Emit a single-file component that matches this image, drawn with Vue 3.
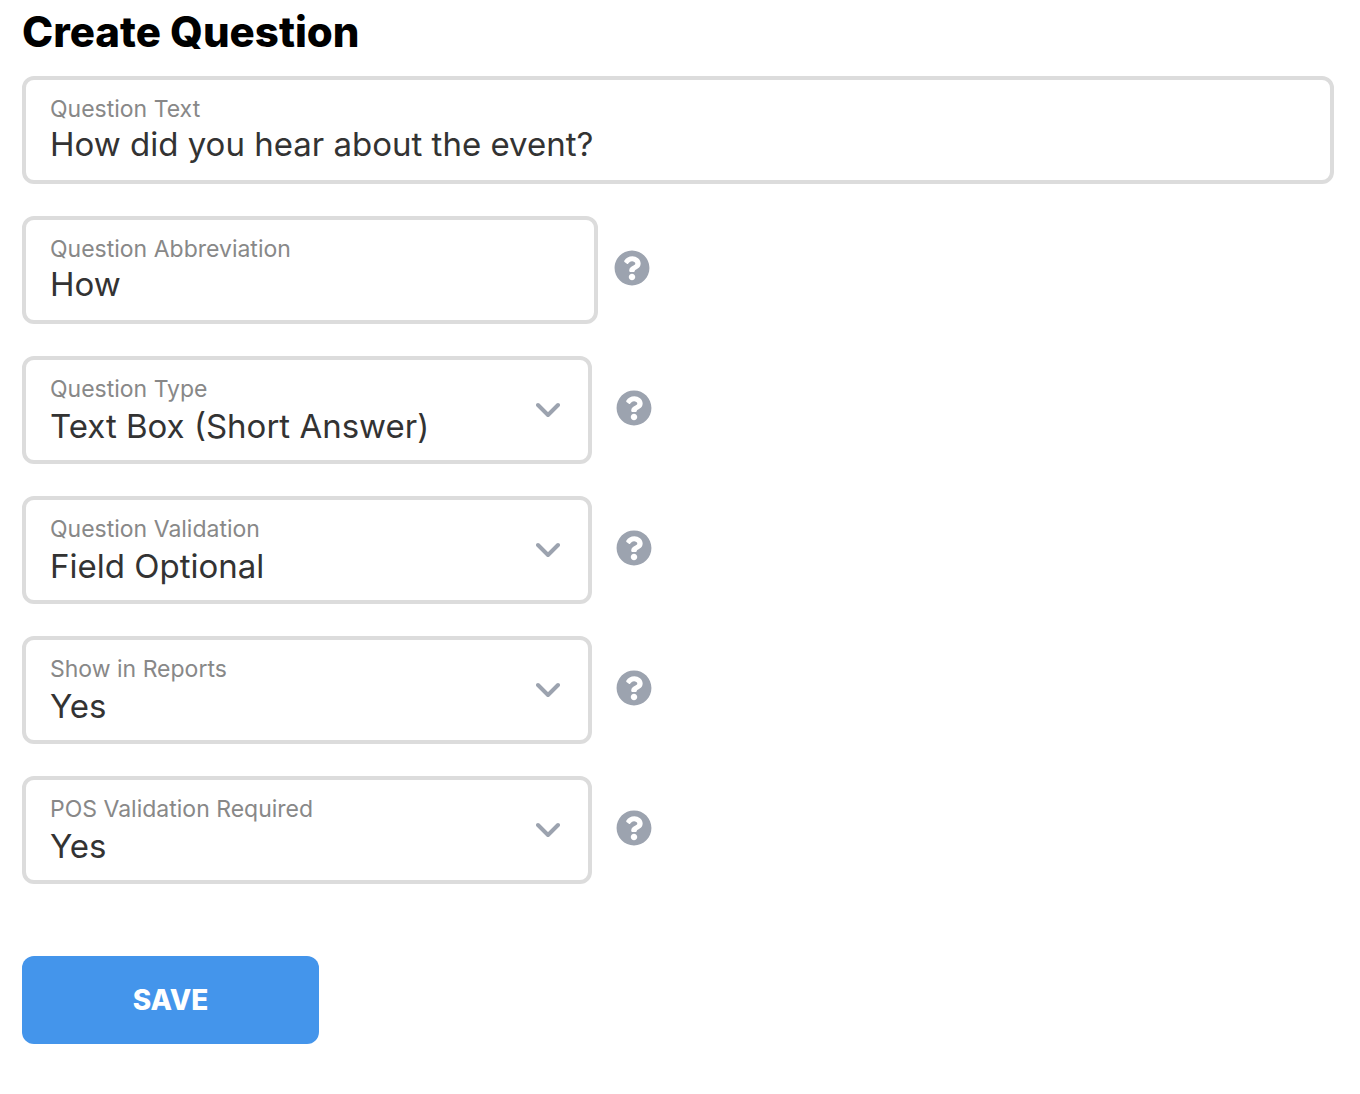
<script setup>
import { ref } from 'vue'

const fields = ref([
  { id: 'text', label: 'Question Text', value: 'How did you hear about the event?', kind: 'input', size: 'full' },
  { id: 'abbreviation', label: 'Question Abbreviation', value: 'How', kind: 'input', size: 'medium', help: true },
  { id: 'type', label: 'Question Type', value: 'Text Box (Short Answer)', kind: 'select', options: ['Text Box (Short Answer)'], size: 'small', help: true },
  { id: 'validation', label: 'Question Validation', value: 'Field Optional', kind: 'select', options: ['Field Optional'], size: 'small', help: true },
  { id: 'reports', label: 'Show in Reports', value: 'Yes', kind: 'select', options: ['Yes'], size: 'small', help: true },
  { id: 'pos', label: 'POS Validation Required', value: 'Yes', kind: 'select', options: ['Yes'], size: 'small', help: true },
])
</script>

<template>
  <main class="page">
    <h1 class="title">Create Question</h1>
    <form class="form" @submit.prevent>
      <div v-for="field in fields" :key="field.id" class="row" :class="field.size">
        <div class="field">
          <div class="content">
            <label class="label" :for="field.id">{{ field.label }}</label>
            <input v-if="field.kind === 'input'" :id="field.id" v-model="field.value" class="value" type="text">
            <select v-else :id="field.id" v-model="field.value" class="value choice">
              <option v-for="option in field.options" :key="option">{{ option }}</option>
            </select>
          </div>
          <svg v-if="field.kind === 'select'" class="chevron" viewBox="0 0 24 16" aria-hidden="true">
            <path d="M2 3 L12 13 L22 3" />
          </svg>
        </div>
        <button v-if="field.help" class="help" type="button" aria-label="Help">
          <svg viewBox="0 0 512 512" aria-hidden="true">
            <path d="M504 256c0 136.997-111.043 248-248 248S8 392.997 8 256C8 119.083 119.043 8 256 8s248 111.083 248 248zM262.655 90c-54.497 0-89.255 22.957-116.549 63.758-3.536 5.286-2.353 12.415 2.715 16.258l34.699 26.31c5.205 3.947 12.621 3.008 16.665-2.122 17.864-22.658 30.113-35.797 57.303-35.797 20.429 0 45.698 13.148 45.698 32.958 0 14.976-12.363 22.667-32.534 33.976C247.128 238.528 216 254.941 216 296v4c0 6.627 5.373 12 12 12h56c6.627 0 12-5.373 12-12v-1.333c0-28.462 83.186-29.647 83.186-106.667 0-58.002-60.165-102-116.531-102zM256 338c-25.365 0-46 20.635-46 46 0 25.364 20.635 46 46 46s46-20.636 46-46c0-25.364-20.635-46-46-46z" />
          </svg>
        </button>
      </div>
      <button class="save" type="submit">SAVE</button>
    </form>
  </main>
</template>

<style>
body {
  background: #fff;
}
</style>

<style scoped>
.page {
  padding: 0 26px 48px 22px;
  font-family: Inter, "Liberation Sans", sans-serif;
}
.title {
  margin: 0;
  padding: 4px 0 16px;
  font-size: 42px;
  line-height: 56px;
  font-weight: 800;
  color: #000;
}
.form {
  display: flex;
  flex-direction: column;
  gap: 32px;
}
.row {
  display: flex;
  align-items: center;
  gap: 24px;
}
.row.medium {
  gap: 16px;
}
.field {
  box-sizing: border-box;
  display: flex;
  align-items: center;
  flex: 0 1 570px;
  min-width: 0;
  height: 108px;
  padding: 0 24px;
  border: 4px solid #dcdcdc;
  border-radius: 12px;
  background: #fff;
}
.full .field {
  flex: 1 1 auto;
}
.medium .field {
  flex-basis: 576px;
}
.content {
  display: flex;
  flex-direction: column;
  align-self: flex-start;
  flex: 1;
  min-width: 0;
  padding-top: 13px;
}
.label {
  font-size: 23px;
  line-height: 32px;
  color: #888;
}
.value {
  appearance: none;
  width: 100%;
  height: 38px;
  margin: 0;
  padding: 0;
  border: 0;
  outline: 0;
  background: transparent;
  font-family: inherit;
  font-size: 33px;
  line-height: 38px;
  color: #333;
}
.choice {
  height: 42px;
  line-height: 42px;
}
.chevron {
  width: 24px;
  height: 16px;
  flex: none;
  margin-right: 4px;
  fill: none;
  stroke: #9ca3af;
  stroke-width: 4;
  stroke-linecap: round;
  stroke-linejoin: round;
}
.help {
  flex: none;
  width: 36px;
  height: 36px;
  margin: 0 0 4px;
  padding: 0;
  border: 0;
  background: none;
  cursor: pointer;
}
.help svg {
  display: block;
  width: 36px;
  height: 36px;
  fill: #9ca3af;
}
.save {
  align-self: flex-start;
  width: 297px;
  height: 88px;
  margin-top: 40px;
  padding: 0;
  border: 0;
  border-radius: 12px;
  background: #4495eb;
  color: #fff;
  font-family: inherit;
  font-size: 28px;
  font-weight: 800;
  cursor: pointer;
}
</style>
